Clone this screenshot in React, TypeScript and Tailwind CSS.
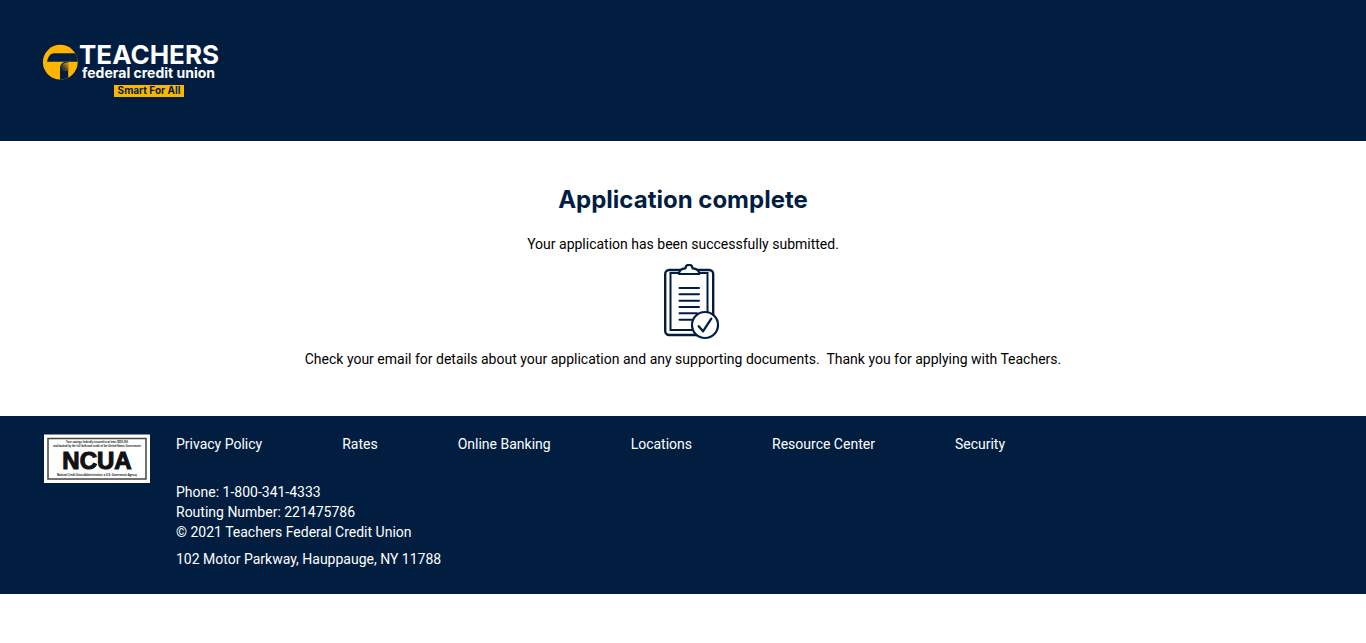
const navLinks = [
  'Privacy Policy',
  'Rates',
  'Online Banking',
  'Locations',
  'Resource Center',
  'Security',
];

function Logo() {
  return (
    <svg
      width="180"
      height="61"
      viewBox="42 36 180 61"
      role="img"
      aria-label="Teachers federal credit union, Smart For All"
      fontFamily="Inter, sans-serif"
    >
      <defs>
        <clipPath id="disc">
          <circle cx="60.3" cy="62.2" r="17.4" />
        </clipPath>
        <linearGradient id="shade" x1="61" y1="71" x2="70" y2="63" gradientUnits="userSpaceOnUse">
          <stop offset="0" stopColor="#011e41" />
          <stop offset="0.4" stopColor="#4c4639" />
          <stop offset="1" stopColor="#ffb500" />
        </linearGradient>
      </defs>
      <g clipPath="url(#disc)">
        <rect x="42" y="44" width="37" height="37" fill="#ffb500" />
        <path d="M47 61.8C48 56.5 50.5 53.3 54.5 53.3H79V61.8Z" fill="#011e41" />
        <path d="M60 81V68C60 64.5 62.5 62 66 61.7H68.2V81Z" fill="#011e41" />
        <path d="M60 71C60 65 62.5 62.4 68.2 62.4V71Z" fill="url(#shade)" />
      </g>
      <text x="79" y="64" fontSize="26" fontWeight="700" fill="#fff">TEACHERS</text>
      <text x="82" y="78" fontSize="14" fontWeight="700" fill="#fff">federal credit union</text>
      <rect x="114" y="85" width="70" height="12" fill="#ffb500" />
      <text x="149" y="94" fontSize="10" fontWeight="700" fill="#011e41" textAnchor="middle">Smart For All</text>
    </svg>
  );
}

function ClipboardIcon() {
  return (
    <svg
      width="56"
      height="76"
      viewBox="664 264 56 76"
      fill="none"
      stroke="#011e41"
      strokeWidth="2"
      strokeLinecap="round"
      strokeLinejoin="round"
      aria-hidden="true"
    >
      <rect x="665.2" y="270" width="48" height="65" rx="4" strokeWidth="2.4" />
      <rect x="670.5" y="273" width="37" height="57" strokeLinejoin="miter" />
      <path
        d="M679 274C679 270 682 268.5 685.5 268.3C685.5 263.8 692.5 263.8 692.5 268.3C696 268.5 699 270 699.3 274Z"
        fill="#fff"
        strokeWidth="2.2"
      />
      <path d="M679.5 288H699M679.5 294.3H699M679.5 300.7H699M679.5 307H699M679.5 313.3H697M679.5 319.7H692" />
      <circle cx="705" cy="325" r="13" fill="#fff" strokeWidth="2.2" />
      <path d="M698.7 326.3L703 331.3L711.3 318.7" strokeWidth="2.3" />
    </svg>
  );
}

function NcuaBadge() {
  return (
    <svg
      width="106"
      height="49"
      viewBox="0 0 106 49"
      role="img"
      aria-label="NCUA"
      fontFamily="'Liberation Sans', Arial, sans-serif"
      fontWeight="700"
      textAnchor="middle"
      fill="#111"
    >
      <rect y="0.5" width="106" height="48.5" fill="#fff" />
      <rect x="4" y="4.5" width="98" height="40.5" fill="none" stroke="#444" strokeWidth="1.5" />
      <text x="53" y="9" fontSize="2.6">Your savings federally insured to at least $250,000</text>
      <text x="53" y="12.5" fontSize="2.6">and backed by the full faith and credit of the United States Government</text>
      <text x="53" y="34.5" fontSize="24" stroke="#111" strokeWidth="1.1">NCUA</text>
      <text x="53" y="42" fontSize="2.6">National Credit Union Administration, a U.S. Government Agency</text>
    </svg>
  );
}

export default function App() {
  return (
    <div className="font-[Roboto,sans-serif] text-sm leading-5 text-black">
      <header className="bg-[#011e41] px-[42px] pt-9 pb-11">
        <a href="#" className="block w-fit">
          <Logo />
        </a>
      </header>

      <main className="flex flex-col items-center bg-white px-4 pt-11 pb-[47px] text-center">
        <h1 className="mb-[19px] font-[Inter,sans-serif] text-2xl leading-[30px] font-bold text-[#011e41]">
          Application complete
        </h1>
        <p className="mb-2.5">Your application has been successfully submitted.</p>
        <div className="mb-[9px] pl-[18px]">
          <ClipboardIcon />
        </div>
        <p className="whitespace-pre-wrap">
          {'Check your email for details about your application and any supporting documents.  Thank you for applying with Teachers.'}
        </p>
      </main>

      <footer className="flex items-start gap-[26px] bg-[#011e41] px-11 pt-[18px] pb-[25px] text-white">
        <div className="shrink-0">
          <NcuaBadge />
        </div>
        <div>
          <nav className="mb-7 flex flex-wrap gap-x-20" aria-label="Footer">
            {navLinks.map((label) => (
              <a key={label} href="#">
                {label}
              </a>
            ))}
          </nav>
          <p>Phone: 1-800-341-4333</p>
          <p>Routing Number: 221475786</p>
          <p>© 2021 Teachers Federal Credit Union</p>
          <p className="mt-[7px]">102 Motor Parkway, Hauppauge, NY 11788</p>
        </div>
      </footer>
    </div>
  );
}
